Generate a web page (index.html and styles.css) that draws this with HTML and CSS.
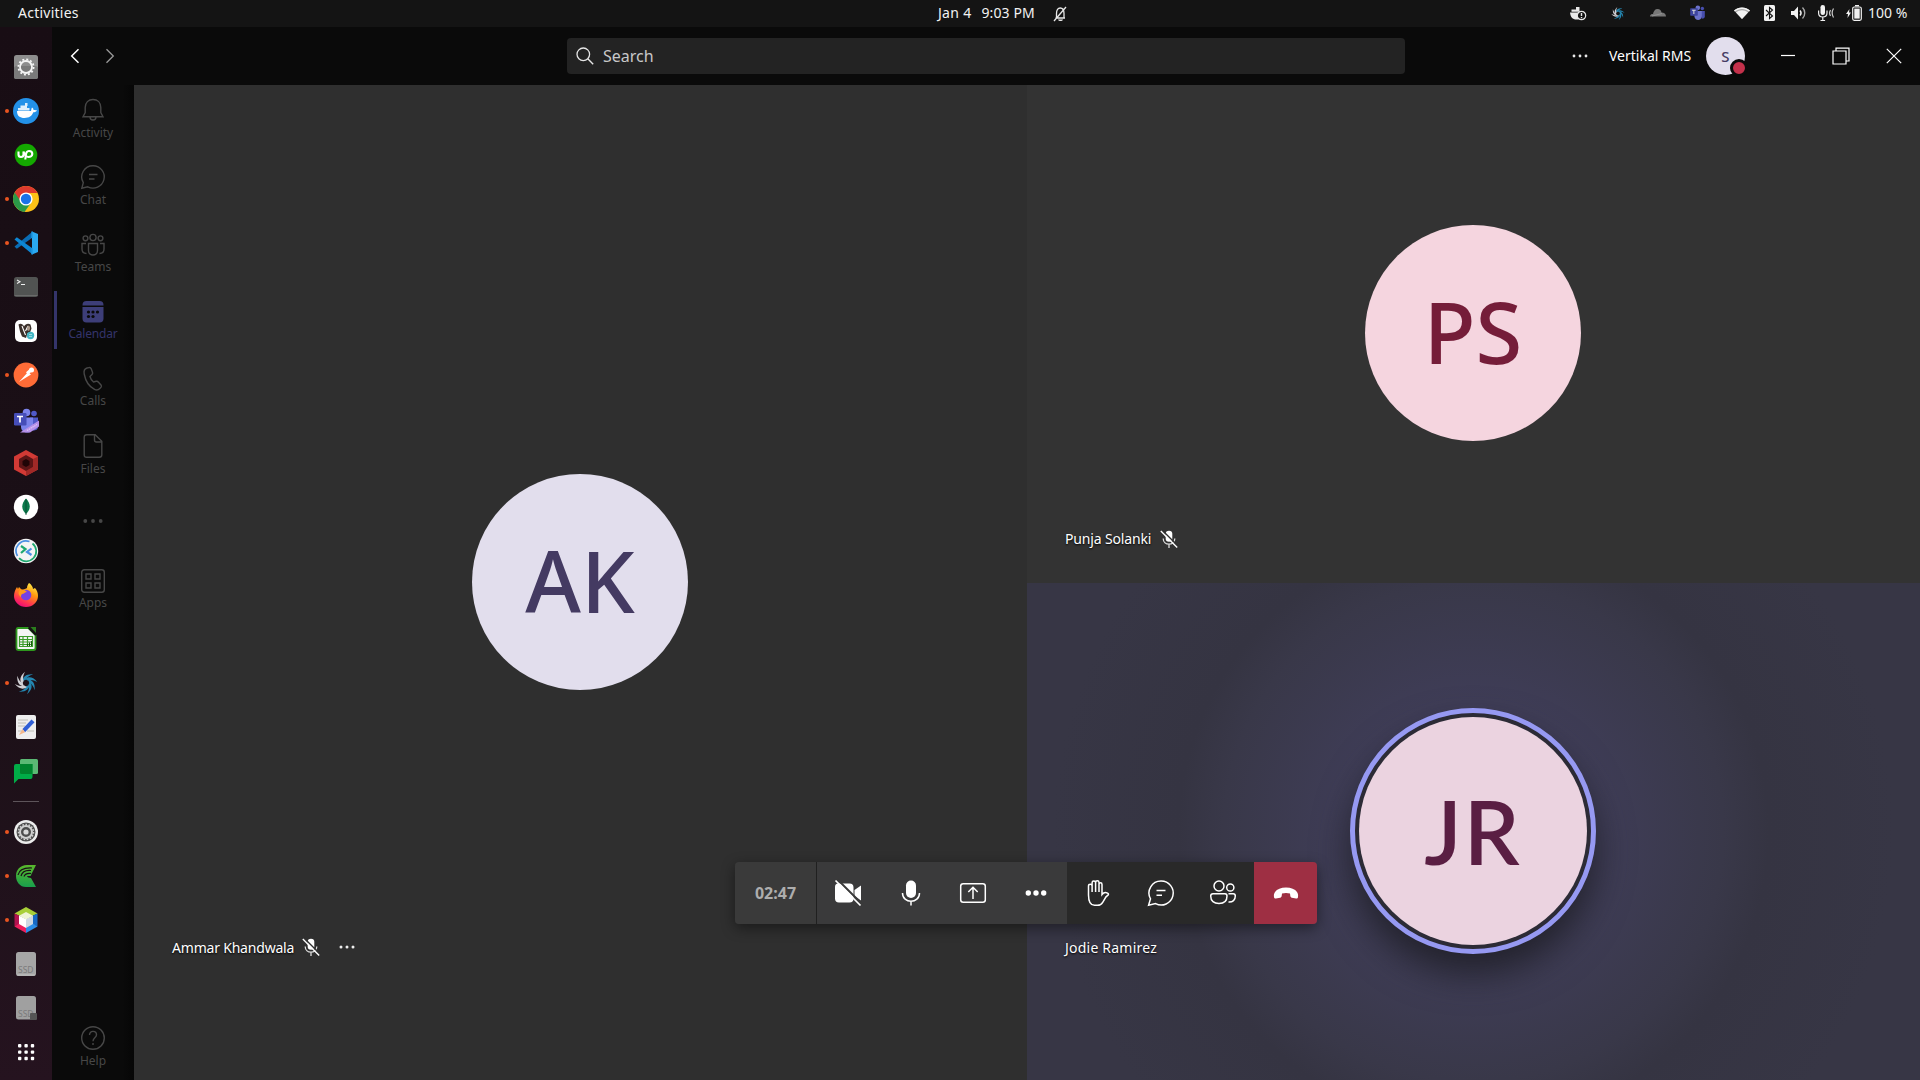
FILE: index.html
```html
<!DOCTYPE html>
<html lang="en">
<head>
<meta charset="utf-8">
<title>Meeting</title>
<link rel="stylesheet" href="styles.css">
</head>
<body>
<div class="desktop">
  <header class="topbar">
    <span class="activities t">Activities</span>
    <div class="clock">
      <span class="t date">Jan 4</span><span class="t time">9:03 PM</span>
      <svg class="bell-off" width="14" height="16" viewBox="0 0 14 16"><path d="M2.5 12h9.5M3.5 12V7.500C3.500 4 5 2 7.200 2S11 4 11 7.500V12M1 15 13 1" fill="none" stroke="#e8e8e8" stroke-width="1.300"/><path d="M5 13.500h5c-.5 2-4.500 2-5 0z" fill="#e8e8e8"/></svg>
    </div>
    <div class="tray">
      <svg class="tray-docker" width="16" height="16" viewBox="0 0 16 16"><path d="M0 7.500h12l1.500-1.500-.5 4c-1 3.500-3 4.500-6.500 4.500C2.500 14.500.5 12 0 7.500z" fill="#e8e8e8"/><path d="M1.500 4.500h8v2.300h-8zM6 2h3.500v3H6z" fill="#e8e8e8"/><circle cx="11.500" cy="10.500" r="4.200" fill="#141414" stroke="#e8e8e8" stroke-width="1.200"/><path d="M11.500 8v3M11.500 12v1.200" stroke="#e8e8e8" stroke-width="1.400"/></svg>
      <svg class="tray-swirl" width="12" height="13" viewBox="0 0 24 24"><use href="#swirl"/></svg>
      <svg class="tray-cloud" width="16" height="10" viewBox="0 0 16 10"><path d="M0 8.500C0 6.500 1.500 6 3 6 3.500 3 5 1 7.500 1S11 2.500 11.500 4.500C14 4.500 16 6 16 8.500z" fill="#777"/><path d="M2 8 12 5.500" stroke="#999" stroke-width=".8"/></svg>
      <svg class="tray-teams" width="17" height="16" viewBox="0 0 28 26"><use href="#teams"/></svg>
      <svg class="tray-wifi" width="16" height="12" viewBox="0 0 16 12"><path d="M8 12 0 3.500C4.500-.5 11.500-.5 16 3.500z" fill="#aaa"/><path d="M8 12 2 5.500C5.500 2.500 10.500 2.500 14 5.500zM0 3.500C4.500-.5 11.500-.5 16 3.500l-.9 1C11 1 5 1 .9 4.500z" fill="#f2f2f2"/></svg>
      <svg class="tray-bt" width="11" height="16" viewBox="0 0 11 16"><rect width="11" height="16" rx="1.500" fill="#f2f2f2"/><path d="m2 5 6.500 6L5.500 13.500v-11L8.500 5 2 11" fill="none" stroke="#141414" stroke-width="1.100"/></svg>
      <svg class="tray-vol" width="15" height="14" viewBox="0 0 15 14"><path d="M0 5h3l4-4.500v13L3 9H0z" fill="#f2f2f2"/><path d="M9 4.500c1.300 1.500 1.300 3.500 0 5" stroke="#f2f2f2" stroke-width="1.400" fill="none"/><path d="M11.500 1.500c3 3 3 8 0 11" stroke="#aaa" stroke-width="1.400" fill="none"/></svg>
      <svg class="tray-mic" width="16" height="16" viewBox="0 0 16 16"><rect x="2.500" y="0" width="4.500" height="10" rx="2.200" fill="#f2f2f2"/><path d="M.6 5.500V8c0 2.500 1.500 4 4.100 4S9 10.500 9 8V5.500M4.800 12v4M2.500 15.500h4.600" fill="none" stroke="#f2f2f2" stroke-width="1.200"/><path d="M12.500 5c-1.300 2-1.300 4 0 6M15.500 3.500c-1.800 3-1.800 6 0 9" fill="none" stroke="#ccc" stroke-width="1.200"/></svg>
      <svg class="tray-bat" width="16" height="16" viewBox="0 0 16 16"><path d="M3.500 4 0 9h2l-.5 4L5 7.500H3z" fill="#f2f2f2"/><path d="M9 .7h4" stroke="#f2f2f2" stroke-width="1.400"/><rect x="6.700" y="2" width="8.600" height="13.300" rx="1.500" fill="#141414" stroke="#f2f2f2" stroke-width="1.200"/><rect x="8.300" y="3.600" width="5.400" height="10" fill="#f2f2f2"/></svg>
      <span class="t pct">100 %</span>
    </div>
  </header>

  <nav class="dock">
    <div class="app"><svg viewBox="0 0 28 28"><rect x="2" y="2" width="24" height="24" rx="2.500" fill="#8e8e8e"/><rect x="2" y="13" width="24" height="13" rx="2.500" fill="#7a7a7a"/><circle cx="14" cy="14" r="6" fill="none" stroke="#f4f4f4" stroke-width="1.800"/><circle cx="14" cy="14" r="7.600" fill="none" stroke="#f4f4f4" stroke-width="1.800" stroke-dasharray="2 1.980"/></svg></div>
    <div class="app on"><svg viewBox="0 0 28 28"><circle cx="14" cy="14" r="13" fill="#2391e8"/><path d="M5 14h14c.5-1.500.3-2.500 1-3.500 1 .5 1.500 1.500 1.500 2.500 1.500-.3 2.500 0 3.500.3-.7 1.500-2 2-3.700 2C20 19 17 21 12.500 21 8 21 5 19 5 14z" fill="#fff"/><path d="M6 11h11.500v2.500H6zM8.500 8.500H15V11H8.500zM13 6h2.500v3H13z" fill="#fff" opacity=".85"/></svg></div>
    <div class="app"><svg viewBox="0 0 28 28"><circle cx="14" cy="14" r="11.300" fill="#14a800"/><path d="M6.500 10.500v3c0 3.300 5 3.300 5 0v-3c1 3 2.500 5.500 5 5.500 2 0 3.800-1.200 3.800-3s-1.300-3-3.200-3c-3 0-3.300 3-3.800 8.500" fill="none" stroke="#fff" stroke-width="2.100"/></svg></div>
    <div class="app on"><svg viewBox="0 0 28 28"><circle cx="14" cy="14" r="13" fill="#fbc116"/><path d="M14 14 2.700 7.500A13 13 0 0 0 12.500 26.900L19.600 17z" fill="#2a9a48"/><path d="M14 8h11.500A13 13 0 0 0 2.700 7.500L8.500 16z" fill="#dd3a2e"/><circle cx="14" cy="14" r="6.600" fill="#fff"/><circle cx="14" cy="14" r="5.200" fill="#1a73e8"/></svg></div>
    <div class="app on"><svg viewBox="0 0 28 28"><path d="M20 2.500 26 5v18l-6 2.500z" fill="#2aa9f2"/><path d="M20 3 2.500 17.500l2.300 2.300L20 9z" fill="#0a6cb4"/><path d="M20 25 2.500 10.500l2.300-2.300L20 19z" fill="#0d86d4"/><path d="M20 2.500V9M20 19v6.500" stroke="#1c95e0" stroke-width="1.500"/></svg></div>
    <div class="app"><svg viewBox="0 0 28 28"><rect x="2" y="4" width="24" height="20" rx="2.500" fill="#515352"/><path d="M2.500 22.500h23" stroke="#6b6b6b"/><path d="m5 7 3 1.800L5 10.500M9 11.500h4" fill="none" stroke="#eee" stroke-width="1.100"/></svg></div>
    <div class="app"><svg viewBox="0 0 28 28"><rect x="3" y="3" width="22" height="22" rx="5" fill="#fff"/><path d="M6.500 7.500c2-1.500 4.500-.5 5.500 2 1.500-3 4.500-3.500 6.500-2l1 4-1.500 4-2.500 1-1.500 4.500-4-1.500-2-5z" fill="#3b302b"/><path d="m10 9 3.500 9M13.500 14l2.500-5" stroke="#fff" stroke-width="1.100"/><path d="M15.500 9c2.500-1 3.500 2 1.500 5l-2-1z" fill="#ab9a8c"/><circle cx="18.500" cy="18.500" r="3.700" fill="#43b6c5"/><path d="M17 17.500h3M17 19.500h3" stroke="#bce8ec" stroke-width=".7"/></svg></div>
    <div class="app on"><svg viewBox="0 0 28 28"><circle cx="14" cy="14" r="12.400" fill="#ff6c37"/><path d="m7 21 9-10 3 2.500L10 19z" fill="#fff"/><circle cx="19.500" cy="9" r="2.500" fill="#fff"/><path d="M15 12.500 19 9" stroke="#fff" stroke-width="3"/></svg></div>
    <div class="app"><svg class="low" viewBox="0 0 28 26"><g id="teams"><circle cx="14.500" cy="4.500" r="3.800" fill="#7b83eb"/><circle cx="22" cy="5.500" r="2.800" fill="#5059c9"/><path d="M18 9.500h8v9c0 3-2 4-5 4z" fill="#5059c9"/><path d="M9 9.500h12v9c0 4-3 6-6 6s-6-2-6-6z" fill="#7b83eb"/><rect x="2" y="5" width="12.500" height="12.500" rx="1.200" fill="#464eb8"/><path d="M5 8.500h6M8 8.500v6" stroke="#fff" stroke-width="1.700"/></g><path d="M8 24.500 27 12.500v6l-9 6z" fill="#b690e8"/><path d="m15 22.500 10-6" stroke="#ddc7f7" stroke-width="1.200" stroke-dasharray="1.500 .6"/></svg></div>
    <div class="app"><svg viewBox="0 0 28 28"><path d="m14 1 12 6.500v13L14 27 2 20.500v-13z" fill="#d23a35"/><path d="M26 7.500v13L14 27v-5l7-4v-8z" fill="#a02927"/><path d="m14 6 7 4v8l-7 4-7-4v-8z" fill="#5c1516"/><path d="m14 10 3.500 2v4L14 18l-3.500-2v-4z" fill="#200406"/></svg></div>
    <div class="app"><svg viewBox="0 0 28 28"><circle cx="14" cy="14" r="12.200" fill="#fff"/><path d="M14 5.500c5 5 5 11 0 15.500-5-4.500-5-10.500 0-15.500z" fill="#0a7a4b"/><path d="M14 6v16" stroke="#054a30" stroke-width=".8"/></svg></div>
    <div class="app"><svg viewBox="0 0 28 28"><circle cx="14" cy="14" r="12.200" fill="#f4f4f4"/><path d="M5.500 19a10 10 0 0 1 12-14.500" fill="none" stroke="#4a90e2" stroke-width="1.700"/><path d="M20.500 6.500A10 10 0 1 1 7 21.200" fill="none" stroke="#1fa870" stroke-width="1.700"/><path d="m9 9 4.500 3L9 16" fill="none" stroke="#1fa870" stroke-width="2.200"/><path d="m19.500 11.500-4.500 3.500 4.500 3" fill="none" stroke="#4a90e2" stroke-width="2.200"/></svg></div>
    <div class="app"><svg viewBox="0 0 28 28"><defs><linearGradient id="fox" x1=".8" y1="0" x2=".3" y2="1"><stop offset="0" stop-color="#fff44f"/><stop offset=".4" stop-color="#ff980e"/><stop offset=".75" stop-color="#ff3750"/><stop offset="1" stop-color="#eb0878"/></linearGradient></defs><path d="M17 2c2 1 4 4 4 6l2-1c2 2 3 5 3 8a12 11 0 0 1-24 0c0-3 1-6 3-9l1 2 1-2 3 3c2-1 4-1 5-2 0-2 1-4 2-5z" fill="url(#fox)"/><circle cx="14" cy="14" r="5.300" fill="#7542e5"/><path d="M8 9c3-1 5 0 7 2-2 0-3 2-5 2-1 1-1 2-1 3-3-2-3-5-1-7z" fill="#ff9a1c"/></svg></div>
    <div class="app"><svg viewBox="0 0 28 28"><path d="M6 3h10.500l7 7v13q0 2-2 2H6.500q-2 0-2-2V5q0-2 1.500-2z" fill="#f5f5f5" stroke="#2d961d" stroke-width="1.800"/><path d="M18.500 2H24v6z" fill="#2b7d1d"/><path d="M16.500 2.500 24 10" stroke="#111" stroke-width="1.800"/><path d="M7.500 11.500h13v10h-13zM7.500 14.500h13M7.500 17h13M7.500 19.500h13M11 11.500v10M15.500 11.500v10" fill="none" stroke="#3b9c2a" stroke-width="1.200"/><path d="M15.500 19v2M17.500 17.500V21M19.500 16v5" stroke="#1a5a10"/></svg></div>
    <div class="app on"><svg viewBox="-4.500 -4.500 33 33"><defs><path id="blade" d="M8 9.500C8.300 4.500 12.500 1 20.500 1.800 16 3.200 13 5 11.800 8.300z"/></defs><g id="swirl"><g fill="#2486b0"><use href="#blade"/><use href="#blade" transform="rotate(45 12 12)"/><use href="#blade" transform="rotate(90 12 12)"/><use href="#blade" transform="rotate(135 12 12)"/><use href="#blade" transform="rotate(180 12 12)"/></g><g fill="#d0d0d4"><use href="#blade" transform="rotate(225 12 12)"/><use href="#blade" transform="rotate(270 12 12)"/><use href="#blade" transform="rotate(315 12 12)"/></g></g></svg></div>
    <div class="app"><svg viewBox="0 0 28 28"><rect x="4" y="2" width="20" height="24" rx="2" fill="#eee"/><path d="M6 7h10M6 10h8M6 13h7M6 18h4M15 18h7" stroke="#bdbdb5" stroke-width="1.100"/><path d="m10.500 16 9-9.500 3 2.800-9.500 10z" fill="#2f5fd6"/><path d="m10.500 16 2.500 3.200L7 22z" fill="#f3b78b"/></svg></div>
    <div class="app"><svg viewBox="0 0 28 28"><rect x="8" y="2" width="18" height="15" rx="1.500" fill="#5bb974"/><path d="M2 9q0-2 2-2h16.500v13q0 2-2 2H6.500L2 26.500z" fill="#00ac47"/><path d="M8 7h12.500v10H9.500Q8 17 8 15.500z" fill="#00832d"/></svg></div>
    <div class="dock-sep"></div>
    <div class="app on"><svg viewBox="0 0 28 28"><circle cx="14" cy="14" r="12" fill="#ececec"/><circle cx="14" cy="14" r="9.500" fill="#4d4d4d"/><circle cx="14" cy="14" r="6" fill="none" stroke="#d0d0d0" stroke-width="2"/><circle cx="14" cy="14" r="7.500" fill="none" stroke="#d0d0d0" stroke-width="1.500" stroke-dasharray="1.600 1.540"/><circle cx="14" cy="14" r="2.600" fill="#d8d8d8"/></svg></div>
    <div class="app on"><svg viewBox="0 0 28 28"><defs><linearGradient id="cam" x1="0" y1="0" x2="0" y2="1"><stop offset="0" stop-color="#5ab82c"/><stop offset="1" stop-color="#199f4c"/></linearGradient></defs><path d="M24 3H15C8 3 4 8 4 14s4 11 10 11h10l-5-9c-2 0-4-1-4-2h3.500z" fill="url(#cam)"/><path d="M6 13c1-5 5-7.500 14-7M9 14c1-4 4-6 10-5.500M12 14.500c1-2.500 3-3.500 7-3" fill="none" stroke="#1a0f16" stroke-width="1.200"/></svg></div>
    <div class="app on"><svg viewBox="0 0 28 28"><path d="m14 1 11.500 6.500L14 13 2.500 7.500z" fill="#a8cf38"/><path d="M2.500 7.500 8 10v8l-5.500 2.500z" fill="#b0134f"/><path d="M25.500 7.500 20 10v8l5.500 2.500z" fill="#1769c4"/><path d="M2.500 20.500 8 17l6 4v6z" fill="#ec1f5e"/><path d="M25.500 20.500 20 17l-6 4v6z" fill="#2c8ee8"/><path d="m7 9.500 7 3.500v9l-7-4z" fill="#fff"/><path d="m21 9.500-7 3.500v9l7-4z" fill="#cfd9e2"/><path d="m14 6 7 3.700-7 3.800-7-3.800z" fill="#eef4d4"/></svg></div>
    <div class="app"><svg viewBox="0 0 28 28"><rect x="4" y="2" width="20" height="24" rx="2.500" fill="#a6a6a6"/><path d="M5 25h18" stroke="#c4c4c4"/><text x="6" y="22.500" class="ssd">SSD</text></svg></div>
    <div class="app"><svg viewBox="0 0 28 28"><rect x="4" y="2" width="20" height="23.500" rx="2.500" fill="#a0a0a0"/><text x="6" y="22.500" class="ssd">SSD</text><rect x="18" y="19" width="7" height="7" rx="1" fill="#555"/></svg></div>
    <div class="app"><svg viewBox="0 0 28 28"><g fill="#fff"><rect x="6" y="6" width="3.400" height="3.400" rx="1"/><rect x="12.400" y="6" width="3.400" height="3.400" rx="1"/><rect x="18.800" y="6" width="3.400" height="3.400" rx="1"/><rect x="6" y="12.400" width="3.400" height="3.400" rx="1"/><rect x="12.400" y="12.400" width="3.400" height="3.400" rx="1"/><rect x="18.800" y="12.400" width="3.400" height="3.400" rx="1"/><rect x="6" y="18.800" width="3.400" height="3.400" rx="1"/><rect x="12.400" y="18.800" width="3.400" height="3.400" rx="1"/><rect x="18.800" y="18.800" width="3.400" height="3.400" rx="1"/></g></svg></div>
  </nav>

  <section class="window">
    <div class="titlebar">
      <div class="history">
        <svg width="10" height="16" viewBox="0 0 10 16"><path d="M8.500 1.200 1.700 8l6.800 6.800" fill="none" stroke="#fff" stroke-width="1.500"/></svg>
        <svg width="10" height="16" viewBox="0 0 10 16"><path d="M1.500 1.200 8.300 8l-6.800 6.800" fill="none" stroke="#9a9a9a" stroke-width="1.300"/></svg>
      </div>
      <div class="search">
        <svg width="18" height="18" viewBox="0 0 18 18"><circle cx="7.300" cy="7.300" r="6.300" fill="none" stroke="#e6e6e6" stroke-width="1.300"/><path d="m11.800 11.800 5.400 5.400" stroke="#e6e6e6" stroke-width="1.400"/></svg>
        <span class="t search-label">Search</span>
      </div>
      <div class="account">
        <svg width="16" height="4" viewBox="0 0 16 4"><g fill="#e8e8e8"><circle cx="2" cy="2" r="1.400"/><circle cx="8" cy="2" r="1.400"/><circle cx="14" cy="2" r="1.400"/></g></svg>
        <span class="t org">Vertikal RMS</span>
        <div class="me"><span>S</span><i class="status"></i></div>
        <svg class="wmin" width="14" height="16" viewBox="0 0 14 16"><path d="M0 7.500h14" stroke="#fff" stroke-width="1.200"/></svg>
        <svg class="wmax" width="18" height="18" viewBox="0 0 18 18"><path d="M1 4h13v13H1zM4 4V1.200h13V14h-3" fill="none" stroke="#fff" stroke-width="1.200"/></svg>
        <svg class="wclose" width="16" height="16" viewBox="0 0 16 16"><path d="m.8.8 14.400 14.400M15.200.8.8 15.200" stroke="#fff" stroke-width="1.200"/></svg>
      </div>
    </div>

    <aside class="rail">
      <div class="tab"><svg viewBox="0 0 24 24"><path d="M2 18.700 4.200 14.500V9.500C4.200 4.500 7.500 1.500 12 1.500s7.800 3 7.800 8v5l2.200 4.200zM9 19c0 4 6 4 6 0"/></svg><span class="t">Activity</span></div>
      <div class="tab"><svg viewBox="0 0 24 24"><path d="M12.200.7a11.200 11.200 0 1 1-5.400 21.100L.8 23.200l1.500-5.600A11.200 11.200 0 0 1 12.200.7zM8 9.500h8.500M8 14h5.500"/></svg><span class="t">Chat</span></div>
      <div class="tab lower"><svg viewBox="0 0 24 24"><circle cx="4.500" cy="5.300" r="2.400"/><circle cx="12" cy="4.500" r="3.100"/><circle cx="19.500" cy="5.300" r="2.400"/><path d="M7.500 10.500h9v7c0 6-9 6-9 0zM5 10.500H1V16c0 3 1.500 4.500 4.500 4.500M19 10.500h4V16c0 3-1.500 4.500-4.500 4.500"/></svg><span class="t">Teams</span></div>
      <div class="tab lower active"><svg viewBox="0 0 24 24"><path d="M1.500 5.500V5a4 4 0 0 1 4-4h13a4 4 0 0 1 4 4v.5zM1.500 7h21v11.500a4 4 0 0 1-4 4h-13a4 4 0 0 1-4-4z" class="solid"/><g class="holes"><circle cx="7.500" cy="12" r="1.600"/><circle cx="12" cy="12" r="1.600"/><circle cx="16.500" cy="12" r="1.600"/><circle cx="7.500" cy="16.500" r="1.600"/><circle cx="12" cy="16.500" r="1.600"/></g></svg><span class="t">Calendar</span></div>
      <div class="tab lower"><svg viewBox="0 0 24 24"><path d="m6 1 2-.4c1-.2 1.800.3 2.200 1.200l1.300 3.400c.3.900.1 1.700-.5 2.300L9 9.500c.5 2 1.500 4 3.500 5.500l2.700-.7c.8-.2 1.600 0 2.100.7l2.700 3c.6.7.6 1.600 0 2.300l-1.200 1.300c-1.500 1.500-3.500 1.800-5.300.8C8 19.500 4.500 14 3.200 7 2.700 4.200 3.500 1.700 6 1z"/></svg><span class="t">Calls</span></div>
      <div class="tab lower files"><svg viewBox="0 0 24 24"><path d="M5.700.7h8.500l6.600 6.600v13.500q0 2.500-2.500 2.500H5.700q-2.500 0-2.500-2.500V3.200Q3.200.7 5.700.7zM13.500.9V6q0 2 2 2h5"/></svg><span class="t">Files</span></div>
      <div class="tab more"><svg viewBox="0 0 24 24"><g class="dots"><circle cx="4.300" cy="12" r="1.900"/><circle cx="12" cy="12" r="1.900"/><circle cx="19.700" cy="12" r="1.900"/></g></svg></div>
      <div class="tab apps"><svg viewBox="0 0 24 24"><rect x=".7" y=".7" width="22.600" height="22.600" rx="2.500"/><path d="M5 5h5v5H5zM14 5h5v5h-5zM5 14h5v5H5zM14 14h5v5h-5z"/></svg><span class="t">Apps</span></div>
      <div class="tab help"><svg viewBox="0 0 24 24"><circle cx="12" cy="12" r="11.300"/><path d="M8.500 9c0-5 7-4.500 7-.3 0 3-3.500 3.300-3.500 6.500M12 17v2"/></svg><span class="t">Help</span></div>
    </aside>

    <main class="stage">
      <div class="tile big">
        <div class="avatar ak"><span class="t">AK</span></div>
        <div class="name"><span class="t">Ammar Khandwala</span>
          <svg width="18" height="18" viewBox="0 0 18 18"><use href="#muted"/></svg>
          <svg class="name-more" width="16" height="4" viewBox="0 0 16 4"><g fill="#eee"><circle cx="2" cy="2" r="1.500"/><circle cx="8" cy="2" r="1.500"/><circle cx="14" cy="2" r="1.500"/></g></svg>
        </div>
      </div>
      <div class="tile upper">
        <div class="avatar ps"><span class="t">PS</span></div>
        <div class="name"><span class="t">Punja Solanki</span>
          <svg width="18" height="18" viewBox="0 0 18 18"><g id="muted"><rect x="5.700" y=".8" width="6.600" height="11" rx="3.300" fill="#fff"/><path d="M3.200 8.500c0 7.500 11.600 7.500 11.600 0M9 14.500V18" fill="none" stroke="#ddd" stroke-width="1.300"/><path d="M2.200.2 18 16" stroke="#303030" stroke-width="1.500"/><path d="m.8 1 16.400 16.400" stroke="#fff" stroke-width="1.400"/></g></svg>
        </div>
      </div>
      <div class="tile speaking">
        <div class="avatar jr"><span class="t">JR</span></div>
        <div class="name"><span class="t">Jodie Ramirez</span></div>
      </div>

      <div class="controls">
        <div class="timer"><span class="t">02:47</span></div>
        <div class="group devices">
          <div class="btn"><svg viewBox="0 0 28 28"><path d="M4 4.500h11.500q4 0 4 4v11q0 4-4 4H5q-4 0-4-4V8q0-3.500 3-3.500zM20.500 11l6.500-4.500v15L20.500 17z" fill="#fff"/><path d="M3 0 28.500 25.500" stroke="#3a3a3a" stroke-width="2"/><path d="m1.500 1.500 25 25" stroke="#fff" stroke-width="1.700"/></svg></div>
          <div class="btn"><svg viewBox="0 0 28 28"><rect x="9" y="1.500" width="10" height="17.500" rx="5" fill="#fff"/><path d="M5.500 14c0 11 17 11 17 0M14 22v4.500" fill="none" stroke="#fff" stroke-width="1.500"/></svg></div>
          <div class="btn"><svg viewBox="0 0 28 28"><rect x="1.700" y="4.700" width="24.600" height="18.600" rx="2.500" fill="none" stroke="#fff" stroke-width="1.500"/><path d="M14 20V8.500M9.300 13 14 8.300l4.700 4.700" fill="none" stroke="#fff" stroke-width="1.500"/></svg></div>
          <div class="btn"><svg viewBox="0 0 28 28"><g fill="#fff"><circle cx="6.300" cy="14" r="2.700"/><circle cx="14" cy="14" r="2.700"/><circle cx="21.700" cy="14" r="2.700"/></g></svg></div>
        </div>
        <div class="group panels">
          <div class="btn"><svg viewBox="0 0 28 28"><path d="M4.500 8v8c0 6 2 10.300 6 10.300h3c2.500 0 4-1 5.200-3l3.300-5.500 2-1.600c.9-.8.4-1.600-.5-2.100-2-1-4-.5-5.500 1.400V5.500c0-2.200-3-2.200-3 0V13M15 13V3.500c0-2.300-3.400-2.300-3.400 0V13M11.600 13V3.800c0-2.300-3.500-2.300-3.500 0V13M8.100 8.300V7c0-2.300-3.600-2.300-3.600 0v5" fill="none" stroke="#fff" stroke-width="1.500"/></svg></div>
          <div class="btn"><svg viewBox="0 0 28 28"><path d="M14.200 2a12 12 0 1 1-5.600 22.600l-7 1.600 1.900-6.400A12 12 0 0 1 14.200 2zM9.500 11.500h9M9.500 16.200h5.500" fill="none" stroke="#fff" stroke-width="1.500"/></svg></div>
          <div class="btn"><svg viewBox="0 0 28 28"><g fill="none" stroke="#fff" stroke-width="1.500"><circle cx="10" cy="7" r="5"/><circle cx="21.300" cy="8.500" r="3.600"/><path d="M4 14.700h12q2 0 2 2.300c0 5-3 7.500-8 7.500s-8.300-2.500-8.300-7.500q0-2.300 2.300-2.300zM19.500 14.700h4.800q2 0 2 2.300c0 4-2.500 6.300-6.800 6"/></g></svg></div>
        </div>
        <div class="hangup"><svg viewBox="0 0 28 28"><path d="M14 8.500c5 0 9 1.500 11 4.500 1.300 2 1.300 3.800.9 5.500-.2.800-1 1.200-1.800 1l-4.300-.8c-.8-.2-1.400-.8-1.500-1.700l-.3-2.500c-2.600-.8-5.400-.8-8 0L9.700 17c-.1.900-.7 1.500-1.500 1.700l-4.300.8c-.8.200-1.600-.2-1.800-1-.4-1.700-.4-3.500.9-5.500 2-3 6-4.500 11-4.500z" fill="#fff"/></svg></div>
      </div>
    </main>
  </section>
</div>
</body>
</html>
```
FILE: styles.css
```css
* { box-sizing: border-box; }
body { margin: 0; background: #0a0a0a; font-family: "Noto Sans", sans-serif; color: #fff; overflow: hidden; }
svg { display: block; flex: none; overflow: visible; }
.t { white-space: nowrap; }

.desktop { width: 1920px; height: 1080px; display: grid; grid-template: 27px 1053px / 52px 1868px; }

.topbar { grid-column: 1 / 3; display: grid; grid-template-columns: 938px 632px 1fr; align-items: center; background: #141414; padding-bottom: 1px; color: #f2f2f2; font-size: 14px; line-height: 24px; }
.activities { padding-left: 18px; justify-self: start; letter-spacing: .25px; }
.clock { display: flex; align-items: center; }
.date { letter-spacing: .3px; }
.time { margin-left: 10px; letter-spacing: .1px; }
.bell-off { margin-left: 18px; position: relative; top: 1px; }
.tray { display: flex; align-items: center; height: 26px; }
.tray-swirl { margin-left: 26px; }
.tray-cloud { margin-left: 26px; }
.tray-teams { margin-left: 23px; opacity: .85; }
.tray-wifi { margin-left: 28px; }
.tray-bt { margin-left: 14px; }
.tray-vol { margin-left: 16px; }
.tray-mic { margin-left: 12px; }
.tray-bat { margin-left: 12px; }
.pct { margin-left: 6px; }

.dock { display: flex; flex-direction: column; align-items: center; padding-top: 18px; background: linear-gradient(#180d14, #1b1017 60%, #25131f); }
.app { position: relative; width: 52px; height: 44px; display: flex; align-items: center; justify-content: center; }
.app svg { width: 28px; height: 28px; }
.app .low { margin-top: 3px; }
.app.on::before { content: ""; position: absolute; left: 5px; top: 20px; width: 4px; height: 4px; border-radius: 50%; background: #e95420; }
.dock-sep { width: 26px; height: 1px; margin: 8px 0; background: #5d545a; }
.ssd { font: 8.500px "Noto Sans", sans-serif; fill: #7b7b7b; }

.window { display: grid; grid-template: 58px 995px / 82px 1786px; background: #0a0a0a; }
.titlebar { grid-column: 1 / 3; display: grid; grid-template-columns: 515px 838px 1fr; align-items: center; }
.history { display: flex; gap: 25px; padding-left: 18px; }
.search { display: flex; align-items: center; gap: 9px; height: 36px; padding-left: 9px; border-radius: 4px; background: #232323; color: #c8c8c8; font-size: 16px; }
.account { display: flex; align-items: center; padding-left: 167px; font-size: 14px; }
.org { margin-left: 21px; width: 83px; padding-bottom: 2px; }
.me { position: relative; display: flex; align-items: center; justify-content: center; width: 39px; height: 38px; margin-left: 14px; border-radius: 50%; background: #e2deed; color: #463c64; font-size: 15px; font-weight: 500; }
.status { position: absolute; left: 24px; top: 22px; width: 18px; height: 18px; border: 3px solid #0a0a0a; border-radius: 50%; background: #c4314b; }
.wmin { margin-left: 36px; }
.wmax { margin-left: 37px; }
.wclose { margin-left: 36px; }

.rail { display: flex; flex-direction: column; background: linear-gradient(90deg, #0a0a0a 86%, #060606); color: #474747; font-size: 12px; }
.tab { display: flex; flex-direction: column; align-items: center; height: 67px; padding-top: 13px; line-height: 16px; }
.tab svg { width: 24px; height: 24px; margin-bottom: 3px; fill: none; stroke: #474747; stroke-width: 1.400; }
.tab.lower { padding-top: 14px; }
.tab.lower svg, .tab.apps svg { margin-bottom: 2px; }
.tab.files svg { margin-bottom: 3px; }
.tab .dots { fill: #474747; stroke: none; }
.tab.more { height: 69px; padding-top: 22px; }
.tab.active { position: relative; color: #34346a; letter-spacing: -.2px; }
.tab.active::before { content: ""; position: absolute; left: 2px; top: 5px; width: 3px; height: 58px; background: #34346a; }
.tab .solid { fill: #3d3e78; stroke: none; }
.tab .holes { fill: #0a0a0a; stroke: none; }
.tab.help { margin-top: auto; }

.stage { position: relative; display: grid; grid-template: 1fr 1fr / 1fr 1fr; }
.tile { position: relative; display: flex; align-items: center; justify-content: center; background: #333; padding: 0 1px 1px 0; }
.tile.big { grid-row: 1 / 3; background: #2f2f2f; }
.tile.speaking { background: radial-gradient(circle at center, #42405f 0, #3f3d57 130px, #393849 250px, #353442 295px, #373645 420px); }
.avatar { display: flex; align-items: center; justify-content: center; width: 216px; height: 216px; padding-bottom: 5px; border-radius: 50%; font: 540 85px "Noto Sans", sans-serif; }
.ak { background: #e2deed; color: #443a62; }
.ps { background: #f5d5df; color: #751d39; }
.jr { width: 228px; height: 228px; padding-bottom: 0; background: #ebd3e0; color: #5a1e43; font: 600 88px Lato, sans-serif; letter-spacing: 2px; box-shadow: 0 0 0 4px #2c2b36; outline: 5px solid #9699f2; outline-offset: 4px; filter: drop-shadow(0 20px 18px rgba(24, 24, 28, .75)); }
.name { position: absolute; left: 38px; bottom: 32px; display: flex; align-items: center; gap: 8px; height: 24px; font-size: 14px; letter-spacing: -.15px; text-shadow: 0 1px 2px #000; }
.upper .name { gap: 9px; }
.big .name, .speaking .name { bottom: 121px; }
.big .name { letter-spacing: -.2px; }
.speaking .name { letter-spacing: .22px; }
.name-more { margin-left: 11px; }

.controls { position: absolute; left: 601px; top: 777px; display: flex; height: 62px; border-radius: 4px; overflow: hidden; box-shadow: 0 4px 14px rgba(0, 0, 0, .45); }
.timer { display: flex; align-items: center; justify-content: center; width: 82px; background: #3a3a3a; border-right: 1px solid #202020; color: #adadad; font-size: 16px; font-weight: 700; }
.group { display: flex; }
.devices { background: #3a3a3b; }
.panels { background: #292929; }
.btn, .hangup { display: flex; align-items: center; justify-content: center; width: 62.500px; }
.btn svg, .hangup svg { width: 28px; height: 28px; }
.hangup { width: 63px; margin-left: -.5px; background: #9e2f43; }
```
